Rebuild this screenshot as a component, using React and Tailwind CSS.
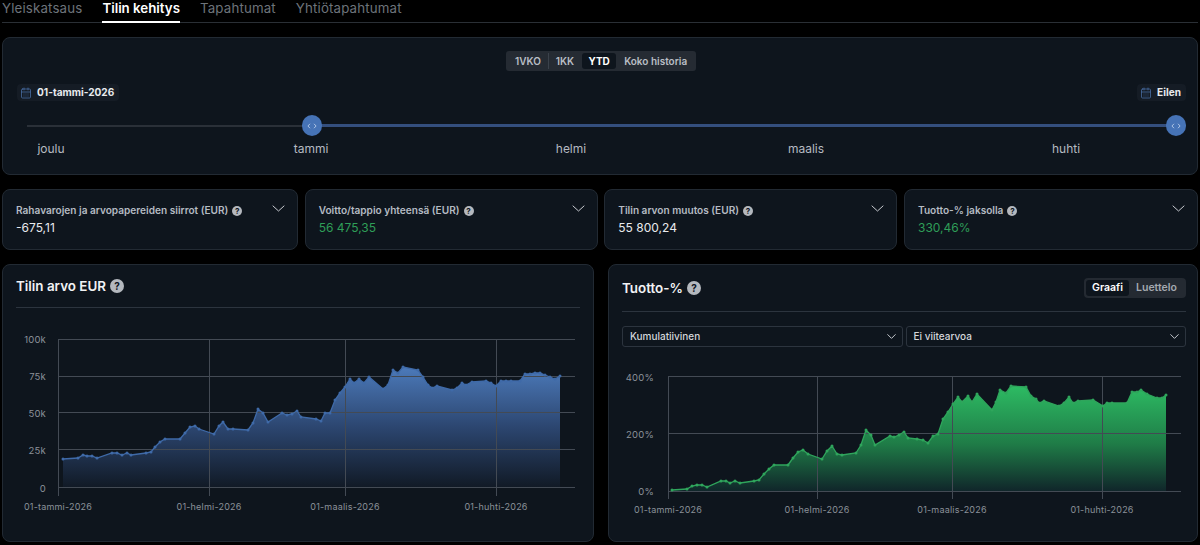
import { CalendarDays, ChevronDown } from 'lucide-react';

const tabs = [
  { label: 'Yleiskatsaus', active: false },
  { label: 'Tilin kehitys', active: true },
  { label: 'Tapahtumat', active: false },
  { label: 'Yhtiötapahtumat', active: false },
];

const ranges = ['1VKO', '1KK', 'YTD', 'Koko historia'];

const months = [
  { label: 'joulu', className: 'ml-[-6px]' },
  { label: 'tammi', className: 'ml-[200px]' },
  { label: 'helmi', className: 'ml-[200px]' },
  { label: 'maalis', className: 'ml-[175px]' },
  { label: 'huhti', className: 'ml-[200px]' },
];

const stats = [
  { title: 'Rahavarojen ja arvopapereiden siirrot (EUR)', value: '-675,11', color: 'text-[#e8eaed]' },
  { title: 'Voitto/tappio yhteensä (EUR)', value: '56 475,35', color: 'text-[#2f9e58]' },
  { title: 'Tilin arvon muutos (EUR)', value: '55 800,24', color: 'text-[#e8eaed]' },
  { title: 'Tuotto-% jaksolla', value: '330,46%', color: 'text-[#2f9e58]' },
];

// points are written in page coordinates, the svg viewBox starts at the panel corner
const valuePoints = [
  [63, 460], [78, 459], [83, 456], [87, 457], [92, 457], [97, 459], [112, 454], [117, 454], [122, 456], [127, 454],
  [131, 456], [146, 454], [151, 453], [155, 448], [160, 443], [165, 440], [180, 440], [185, 434], [190, 428], [195, 427],
  [199, 430], [214, 435], [219, 427], [223, 423], [228, 430], [233, 430], [248, 431], [253, 424], [258, 410], [263, 414],
  [268, 423], [282, 414], [287, 416], [292, 415], [297, 412], [301, 418], [316, 420], [321, 422], [325, 414], [330, 414],
  [335, 401], [340, 394], [345, 388], [350, 380], [354, 384], [359, 380], [364, 384], [369, 378], [383, 390], [388, 386],
  [393, 371], [398, 374], [403, 368], [418, 371], [423, 378], [428, 386], [432, 389], [437, 387], [452, 391], [457, 389],
  [462, 384], [466, 386], [472, 383], [486, 382], [491, 384], [496, 387], [501, 382], [506, 382], [511, 382], [520, 382],
  [525, 375], [530, 375], [535, 374], [540, 374], [545, 376], [550, 378], [555, 380], [560, 377],
];

const returnPoints = [
  [672, 491], [687, 490], [692, 487], [697, 486], [702, 486], [707, 488], [721, 482], [726, 482], [730, 484], [735, 482],
  [740, 484], [754, 482], [759, 481], [764, 475], [769, 470], [774, 466], [788, 466], [793, 459], [798, 453], [803, 451],
  [808, 455], [822, 460], [827, 452], [832, 447], [837, 455], [842, 456], [856, 454], [861, 446], [866, 431], [871, 436],
  [875, 446], [890, 437], [894, 438], [899, 436], [904, 433], [908, 439], [917, 440], [923, 441], [928, 444], [933, 437],
  [938, 435], [943, 420], [948, 413], [953, 405], [958, 398], [962, 403], [968, 397], [972, 403], [977, 395], [992, 411],
  [996, 403], [1000, 391], [1006, 394], [1011, 387], [1026, 388], [1031, 397], [1036, 400], [1039, 404], [1044, 402],
  [1059, 407], [1064, 404], [1069, 398], [1073, 404], [1078, 402], [1093, 401], [1103, 407], [1107, 404], [1112, 404],
  [1127, 404], [1132, 393], [1137, 393], [1141, 391], [1147, 395], [1157, 399], [1162, 399], [1166, 396],
];

const toLine = (points) => points.map(([x, y]) => `${x},${y}`).join(' ');

const HelpDot = ({ small }) => (
  <span
    className={
      small
        ? 'inline-flex w-[10px] h-[10px] rounded-full bg-[#b4b8be] text-[#0e151d] text-[8px] leading-none font-bold items-center justify-center'
        : 'inline-flex w-[14px] h-[14px] rounded-full bg-[#b4b8be] text-[#0e151d] text-[10px] leading-none font-bold items-center justify-center'
    }
  >
    ?
  </span>
);

const Thumb = ({ className }) => (
  <span className={`absolute top-0 w-[20px] h-[21px] rounded-full bg-[#4673b6] flex items-center justify-center ${className}`}>
    <svg width="10" height="6" viewBox="0 0 10 6" fill="none" stroke="#b9cdea" strokeWidth="0.9">
      <path d="M3 0.8 0.9 3 3 5.2" />
      <path d="M7 0.8 9.1 3 7 5.2" />
    </svg>
  </span>
);

const DateChip = ({ label }) => (
  <div className="h-[17px] pl-[3px] pr-[5px] rounded bg-[#151c25] flex items-center gap-[5px]">
    <CalendarDays size={12} strokeWidth={1.5} className="text-[#4a70a8]" />
    <span className="text-[10.1px] font-bold text-[#e8eaed]">{label}</span>
  </div>
);

const Chart = ({ viewBox, width, height, points, gridX, gridY, xLabels, yLabels, left, right, base, labelY, tickY, color, fills, id }) => {
  const first = points[0];
  const last = points[points.length - 1];
  return (
    <svg width={width} height={height} viewBox={viewBox} className="block">
      <defs>
        <linearGradient id={id} x1="0" y1="0" x2="0" y2="1">
          {fills.map(([offset, stopColor]) => (
            <stop key={offset} offset={offset} stopColor={stopColor} />
          ))}
        </linearGradient>
      </defs>
      <polygon points={`${first[0]},${base} ${toLine(points)} ${last[0]},${base}`} fill={`url(#${id})`} />
      {gridY.map((y) => (
        <line key={y} x1={left} x2={right} y1={y} y2={y} stroke="#434a54" />
      ))}
      {gridX.map((x) => (
        <line key={x} x1={x} x2={x} y1={gridY[0]} y2={tickY} stroke="#434a54" />
      ))}
      <polyline points={toLine(points)} fill="none" stroke={color} strokeWidth="1.3" />
      {points.map(([x, y]) => (
        <circle key={x} cx={x} cy={y} r="1.5" fill={color} />
      ))}
      {yLabels.map(([label, x, y]) => (
        <text key={label} x={x} y={y} textAnchor="end" fontSize="9.5" letterSpacing="0.2" fill="#8b9199" dominantBaseline="central">
          {label}
        </text>
      ))}
      {xLabels.map(([label, x]) => (
        <text key={label} x={x} y={labelY} textAnchor="middle" fontSize="9" letterSpacing="0.2" fill="#8b9199" dominantBaseline="central">
          {label}
        </text>
      ))}
    </svg>
  );
};

const Dropdown = ({ label }) => (
  <div className="flex-1 h-[21px] px-[7px] rounded-[3px] border border-[#2c343e] flex items-center justify-between text-[10px] font-medium text-[#d4d7db]">
    <span>{label}</span>
    <ChevronDown size={15} strokeWidth={1.6} className="text-[#c4c8cd] mr-[-4px]" />
  </div>
);

export default function App() {
  return (
    <div className="w-[1200px] h-[545px] bg-black overflow-hidden px-[2px] font-['Inter',sans-serif]">
      <div className="h-[23px] flex gap-[20px] border-b border-[#2a2f35]">
        {tabs.map((tab) => (
          <div
            key={tab.label}
            className={
              tab.active
                ? 'h-[23px] text-[13.3px] leading-[17px] font-semibold text-white border-b-2 border-white'
                : 'h-[23px] text-[13.3px] leading-[17px] tracking-[0.15px] text-[#6d737a]'
            }
          >
            {tab.label}
          </div>
        ))}
      </div>

      <div className="mt-[14px] h-[138px] rounded-lg border border-[#222a33] bg-[#0e151d] pt-[13px]">
        <div className="flex justify-center pl-[2px]">
          <div className="h-[20px] w-[190px] rounded-[3px] bg-[#252b33] flex items-center px-[2px] text-[10px] leading-[16px] font-semibold text-[#b9bec5]">
            {ranges.map((range, i) => (
              <span
                key={range}
                className={
                  range === 'YTD'
                    ? 'h-[16px] w-[34px] ml-[7px] rounded-[3px] bg-[#0e151d] text-white font-bold flex items-center justify-center'
                    : i === 0
                      ? 'pl-[7px] pr-[7px] border-r border-[#3b424b]'
                      : i === 1
                        ? 'pl-[7px] pr-[1px]'
                        : 'pl-[8px]'
                }
              >
                {range}
              </span>
            ))}
          </div>
        </div>

        <div className="mt-[13px] pl-[14px] pr-[11px] flex justify-between">
          <DateChip label="01-tammi-2026" />
          <DateChip label="Eilen" />
        </div>

        <div className="relative mt-[14px] ml-[24px] w-[1150px] h-[21px] flex items-center">
          <div className="w-[285px] h-[2px] bg-[#2a3038]" />
          <div className="flex-1 h-[3px] bg-[#344f7e]" />
          <Thumb className="left-[275px]" />
          <Thumb className="right-[-9px]" />
        </div>

        <div className="mt-[4px] ml-[24px] flex text-[12px] leading-[17px] text-[#b5bac1]">
          {months.map((month) => (
            <span key={month.label} className={`w-[60px] text-center ${month.className}`}>
              {month.label}
            </span>
          ))}
        </div>
      </div>

      <div className="mt-[14px] grid grid-cols-[296px_293px_293px_294px] gap-x-[6.67px]">
        {stats.map((stat) => (
          <div key={stat.title} className="h-[61px] rounded-lg border border-[#222a33] bg-[#0e151d] pl-[13px] pr-[12px] pt-[12px] flex justify-between">
            <div>
              <div className="flex items-center gap-[4px] h-[17px] text-[10.1px] font-semibold text-[#b5bbc3]">
                {stat.title}
                <HelpDot small />
              </div>
              <div className="text-[12px] leading-[18px]">
                <span className={stat.color}>{stat.value}</span>
              </div>
            </div>
            <svg width="13" height="7" viewBox="0 0 13 7" fill="none" stroke="#c9ccd1" strokeWidth="1" className="mt-[3px]">
              <path d="M0.7 0.7 6.5 6 12.3 0.7" />
            </svg>
          </div>
        ))}
      </div>

      <div className="mt-[14px] flex gap-[14px]">
        <div className="w-[592px] h-[278px] rounded-lg border border-[#222a33] bg-[#0e151d]">
          <div className="mx-[13px] h-[43px] pt-[11px] border-b border-[#2c343e] flex items-start">
            <div className="flex items-center gap-[4px] h-[20px]">
              <span className="text-[13.4px] leading-[20px] font-semibold text-[#f1f2f4]">Tilin arvo EUR</span>
              <HelpDot />
            </div>
          </div>
          <Chart
            id="valueFill"
            viewBox="3 309 590 232"
            width={590}
            height={232}
            points={valuePoints}
            gridX={[58.5, 209.5, 345.5, 496.5]}
            gridY={[340.5, 377.5, 413.5, 450.5, 488.5]}
            left={58}
            right={575}
            base={488}
            labelY={507}
            tickY={497}
            color="#3f6aa8"
            fills={[['0%', '#4c7aba'], ['50%', '#2c4670'], ['100%', '#111a26']]}
            xLabels={[['01-tammi-2026', 58], ['01-helmi-2026', 209], ['01-maalis-2026', 345], ['01-huhti-2026', 496]]}
            yLabels={[['100k', 46, 340], ['75k', 46, 377], ['50k', 46, 414], ['25k', 46, 451], ['0', 46, 489]]}
          />
        </div>

        <div className="w-[590px] h-[278px] rounded-lg border border-[#222a33] bg-[#0e151d]">
          <div className="ml-[13px] mr-[11px] h-[47px] pt-[13px] border-b border-[#2c343e] flex items-start justify-between">
            <div className="flex items-center gap-[4px] h-[20px]">
              <span className="text-[13.4px] leading-[20px] font-semibold text-[#f1f2f4]">Tuotto-%</span>
              <HelpDot />
            </div>
            <div className="h-[20px] w-[102px] rounded-[4px] bg-[#242a32] flex items-center px-[2px] text-[10.5px] font-semibold">
              <span className="h-[16px] w-[43px] rounded-[3px] bg-[#0e151d] text-white flex items-center justify-center">Graafi</span>
              <span className="flex-1 text-center text-[#a3a9b0]">Luettelo</span>
            </div>
          </div>
          <div className="ml-[13px] mr-[11px] mt-[14px] flex gap-[3px]">
            <Dropdown label="Kumulatiivinen" />
            <Dropdown label="Ei viitearvoa" />
          </div>
          <Chart
            id="returnFill"
            viewBox="609 348 588 193"
            width={588}
            height={193}
            points={returnPoints}
            gridX={[668.5, 817.5, 952.5, 1102.5]}
            gridY={[377.5, 434.5, 492.5]}
            left={668}
            right={1181}
            base={492}
            labelY={510}
            tickY={500}
            color="#2fa55c"
            fills={[['0%', '#2dbb63'], ['55%', '#1f7c47'], ['100%', '#10262a']]}
            xLabels={[['01-tammi-2026', 668], ['01-helmi-2026', 817], ['01-maalis-2026', 952], ['01-huhti-2026', 1102]]}
            yLabels={[['400%', 654, 378], ['200%', 654, 435], ['0%', 654, 492]]}
          />
        </div>
      </div>
    </div>
  );
}
